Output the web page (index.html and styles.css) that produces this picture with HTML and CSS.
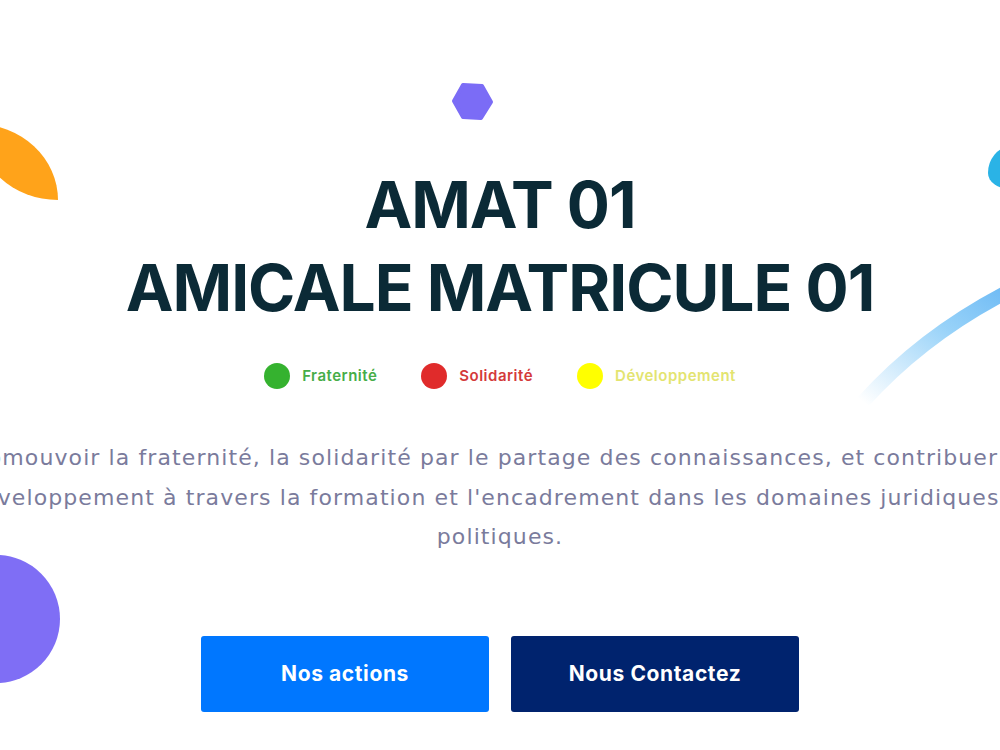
FILE: index.html
```html
<!DOCTYPE html>
<html lang="fr">
<head>
  <meta charset="UTF-8">
  <meta name="viewport" content="width=device-width, initial-scale=1.0">
  <title>AMAT 01 - Amicale Matricule 01</title>
  <link rel="stylesheet" href="styles.css">
</head>
<body>
  <section class="hero">
    <!-- Decorative shapes -->
    <span class="shape leaf-orange"></span>
    <span class="shape drop-blue"></span>
    <span class="shape circle-purple"></span>
    <svg class="shape hexagon" width="44" height="40" viewBox="0 0 44 40">
      <polygon points="12,3 31,4 40,20 30,36 12,35 3,19" fill="#7b6cf6" stroke="#7b6cf6" stroke-width="4" stroke-linejoin="round"/>
    </svg>
    <svg class="shape streak" width="150" height="130" viewBox="0 0 150 130">
      <defs>
        <linearGradient id="streakFade" x1="0" y1="1" x2="1" y2="0">
          <stop offset="0" stop-color="#8ccdf8" stop-opacity="0"/>
          <stop offset="0.6" stop-color="#8ccdf8" stop-opacity="0.9"/>
          <stop offset="1" stop-color="#6ab8f4"/>
        </linearGradient>
      </defs>
      <path d="M8 124 Q 70 55 160 10" fill="none" stroke="url(#streakFade)" stroke-width="14" stroke-linecap="round"/>
    </svg>

    <h1 class="title">AMAT 01<br>AMICALE MATRICULE 01</h1>

    <ul class="values">
      <li class="value green"><span class="dot"></span>Fraternité</li>
      <li class="value red"><span class="dot"></span>Solidarité</li>
      <li class="value yellow"><span class="dot"></span>Développement</li>
    </ul>

    <p class="intro">Promouvoir la fraternité, la solidarité par le partage des connaissances, et contribuer au<br>
      développement à travers la formation et l'encadrement dans les domaines juridiques et<br>
      politiques.</p>

    <div class="actions">
      <a href="#actions" class="btn btn-primary">Nos actions</a>
      <a href="#contact" class="btn btn-dark">Nous Contactez</a>
    </div>
  </section>
</body>
</html>
```

FILE: styles.css
```css
body {
  margin: 0;
  background-color: #fff;
  font-family: Inter, "Open Sans", Arial, sans-serif;
  overflow: hidden;
}

.hero {
  position: relative;
  height: 750px;
  display: flex;
  flex-direction: column;
  align-items: center;
  padding-top: 163px;
  box-sizing: border-box;
}

.shape {
  position: absolute;
  display: block;
}

.leaf-orange {
  left: -24px;
  top: 124px;
  width: 82px;
  height: 76px;
  background-color: #ffa31a;
  border-radius: 0 100% 0 100%;
}

.drop-blue {
  left: 988px;
  top: 147px;
  width: 44px;
  height: 42px;
  background-color: #2ab3e6;
  border-radius: 50% 50% 50% 50% / 62% 62% 38% 38%;
}

.circle-purple {
  left: -68px;
  top: 555px;
  width: 128px;
  height: 128px;
  border-radius: 50%;
  background-color: #7f6ef5;
}

.hexagon {
  left: 451px;
  top: 82px;
}

.streak {
  left: 855px;
  top: 278px;
}

.title {
  margin: 0;
  font-size: 64px;
  line-height: 83px;
  font-weight: 700;
  color: #0b2a36;
  text-align: center;
  letter-spacing: -1px;
}

.values {
  list-style: none;
  margin: 34px 0 0;
  padding: 0;
  display: flex;
  gap: 44px;
}

.value {
  display: flex;
  align-items: center;
  gap: 12px;
  font-size: 15px;
  font-weight: 600;
  letter-spacing: 0.5px;
  line-height: 26px;
}

.dot {
  width: 26px;
  height: 26px;
  border-radius: 50%;
}

.green { color: #46ad48; }
.green .dot { background-color: #35b22f; }
.red { color: #d43a3a; }
.red .dot { background-color: #e02b2b; }
.yellow { color: #e3e470; }
.yellow .dot { background-color: #ffff00; }

/* the intro is wider than the viewport, its lines run off both sides */
.intro {
  width: 1200px;
  margin: 49px 0 0;
  font-family: "DejaVu Sans", Inter, sans-serif;
  font-size: 22px;
  line-height: 39.5px;
  letter-spacing: 1.1px;
  color: #7a7b9c;
  text-align: center;
}

.actions {
  margin-top: 79px;
  display: flex;
  gap: 22px;
}

.btn {
  width: 288px;
  height: 76px;
  display: flex;
  align-items: center;
  justify-content: center;
  border-radius: 3px;
  color: #fff;
  font-size: 21px;
  font-weight: 700;
  letter-spacing: 0.6px;
  text-decoration: none;
}

.btn-primary {
  background-color: #0077ff;
}

.btn-dark {
  background-color: #00236e;
}
```
